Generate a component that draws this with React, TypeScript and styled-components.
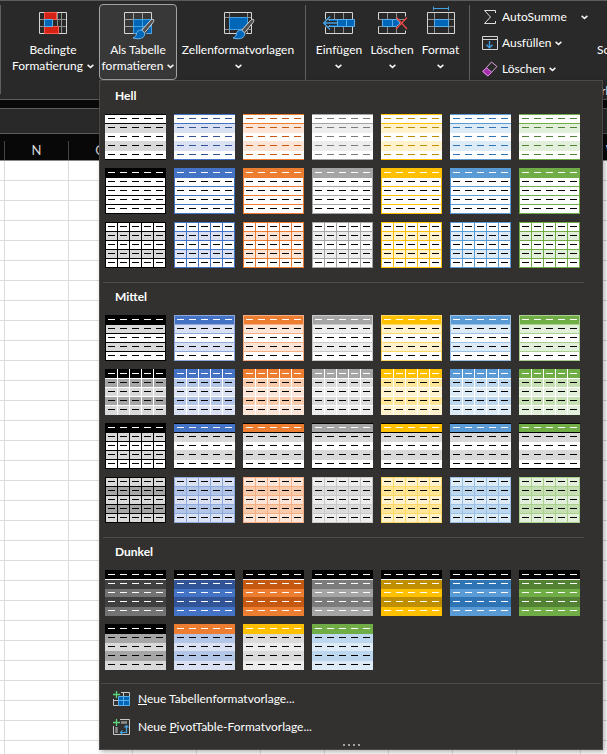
import React from 'react';
import styled, { createGlobalStyle, css } from 'styled-components';

const GlobalStyle = createGlobalStyle`
  *, *::before, *::after { box-sizing: border-box; }
  body {
    margin: 0;
    background: #ffffff;
    color: #ffffff;
    font-family: Lato, 'Open Sans', sans-serif;
    font-size: 12px;
    line-height: 16px;
  }
  button { font: inherit; color: inherit; }
`;

const Page = styled.div`
  display: flex;
  flex-direction: column;
  height: 100vh;
  overflow: hidden;
`;

/* ---------- ribbon ---------- */

const Ribbon = styled.header`
  position: relative;
  z-index: 2;
  display: flex;
  height: 100px;
  flex: none;
  background: #292929;
  border-top: 1px solid #5c5c5c;
  border-bottom: 1px solid #5c5c5c;
`;

const Group = styled.div`
  display: flex;
  flex: none;
  align-items: flex-start;
  padding: 3px 6px 0;
`;

const Divider = styled.div`
  flex: none;
  width: 1px;
  height: 89px;
  margin-top: 4px;
  background: #5f5f5f;
`;

const Anchor = styled.div`
  position: relative;
`;

const BigButton = styled.button<{ $width: number; $active?: boolean }>`
  display: flex;
  flex-direction: column;
  align-items: center;
  width: ${(p) => p.$width}px;
  height: 76px;
  padding: 0;
  border: 1px solid transparent;
  border-radius: 4px;
  background: transparent;
  white-space: nowrap;
  ${(p) =>
    p.$active &&
    css`
      border-color: #a3a3a3;
      background: #383838;
    `}
`;

const Label = styled.span`
  display: flex;
  flex-direction: column;
  align-items: center;
`;

const LabelLine = styled.span`
  display: flex;
  align-items: center;
  justify-content: center;
  gap: 4px;
  height: 16px;
`;

const EditingGroup = styled.div`
  display: flex;
  flex: none;
  flex-direction: column;
  justify-content: space-between;
  width: 280px;
`;

const EditingTools = styled.div`
  display: flex;
`;

const GroupName = styled.div`
  text-align: center;
`;

const SmallColumn = styled.div`
  display: flex;
  flex-direction: column;
  align-items: flex-start;
  padding: 3px 0 0 12px;
  width: 124px;
  flex: none;
`;

const SmallButton = styled.button<{ $gap: number }>`
  display: flex;
  align-items: center;
  height: 26px;
  padding: 0;
  border: 0;
  background: transparent;
  white-space: nowrap;
  svg:first-child { margin-right: 4px; }
  svg:last-child { margin-left: ${(p) => p.$gap}px; }
`;

const SortButton = styled.button`
  display: block;
  height: 76px;
  margin-left: 3px;
  padding: 37px 0 0;
  border: 0;
  background: transparent;
  white-space: nowrap;
`;

const FormulaBar = styled.div`
  flex: none;
  height: 26px;
  margin-top: 8px;
  background: #292929;
  border-top: 1px solid #5c5c5c;
  border-bottom: 1px solid #5c5c5c;
`;

const DarkStrip = styled.div`
  display: flex;
  flex: none;
  flex-direction: column;
  background: #080808;
`;

/* ---------- sheet ---------- */

const SheetArea = styled.main`
  flex: 1;
  min-height: 0;
  overflow: hidden;
`;

const Sheet = styled.table`
  border-collapse: separate;
  border-spacing: 0;
  table-layout: fixed;
  width: 645px;
  color: #000000;

  col { width: 64px; }
  col:first-child { width: 5px; }

  th {
    height: 27px;
    padding: 7px 0 0;
    background: #080808;
    border-bottom: 1px solid #8a8a8a;
    color: #d8d8d8;
    font-size: 13px;
    font-weight: 400;
    line-height: 19px;
  }
  th span {
    display: block;
    height: 19px;
    border-right: 1px solid #444444;
  }
  td {
    height: 20px;
    padding: 0;
    border-right: 1px solid #dcdcdc;
    border-bottom: 1px solid #dcdcdc;
  }
`;

/* ---------- gallery menu ---------- */

const Menu = styled.div`
  position: absolute;
  top: 100%;
  left: 0;
  background: #323130;
  border: 1px solid #4a4948;
  box-shadow: 2px 2px 5px rgba(0, 0, 0, 0.3);
`;

const Section = styled.section<{ $first?: boolean }>`
  padding: ${(p) => (p.$first ? 1 : 0)}px 22px 0 5px;
`;

const SectionTitle = styled.h2`
  margin: 0 0 4px 10px;
  font-size: 12px;
  font-weight: 700;
  line-height: 28px;
`;

const Gallery = styled.div`
  display: grid;
  grid-template-columns: repeat(7, 61px);
  gap: 8px;
`;

const Swatch = styled.button`
  display: block;
  width: 61px;
  height: 46px;
  padding: 0;
  border: 0;
  background: transparent;
  svg { display: block; }
`;

const Separator = styled.hr<{ $wide?: boolean }>`
  height: 1px;
  margin: ${(p) => (p.$wide ? '13px 1px 1px' : '14px 18px 0 3px')};
  border: 0;
  background: #4e4d4c;
`;

const MenuItem = styled.button`
  display: flex;
  align-items: center;
  gap: 8px;
  width: 100%;
  height: 28px;
  padding: 0 13px;
  border: 0;
  background: transparent;
  text-align: left;
`;

const Grip = styled.div`
  display: flex;
  justify-content: center;
  gap: 3px;
  padding: 3px 0;
  i { width: 2px; height: 2px; background: #a0a0a0; }
`;

/* ---------- table style swatches ---------- */

type Look = {
  header: string;
  odd: string;
  even: string;
  dash: string;
  headDash: string;
  /* y offsets of horizontal rules */
  rules: number[];
  /* x offsets of vertical rules */
  columns: number[];
  line: string;
};

const ACCENT = ['#000000', '#4472c4', '#ed7d31', '#a5a5a5', '#ffc000', '#5b9bd5', '#70ad47'];
const DARK = ['#000000', '#305496', '#c65911', '#7b7b7b', '#bf8f00', '#2f75b5', '#548235'];
const SOFT = ['#000000', '#8ea9db', '#f4b084', '#c9c9c9', '#ffd966', '#9bc2e6', '#a9d08e'];
const MID = ['#a6a6a6', '#b4c6e7', '#f8cbad', '#dbdbdb', '#ffe699', '#bdd7ee', '#c6e0b4'];
const PALE = ['#d9d9d9', '#d9e1f2', '#fce4d6', '#ededed', '#fff2cc', '#ddebf7', '#e2efda'];
const WHITE = '#ffffff';
const BLACK = '#000000';

const ALL_RULES = [0, 9, 18, 27, 36, 45];
const INNER_RULES = [9, 18, 27, 36];
const ALL_COLUMNS = [0, 12, 24, 36, 48, 60];
const INNER_COLUMNS = [12, 24, 36, 48];
const SIDES = [0, 60];

const seven = (make: (i: number) => Look) => ACCENT.map((_, i) => make(i));

const light: Look[] = [
  ...seven((i) => ({ header: WHITE, odd: PALE[i], even: WHITE, dash: DARK[i], headDash: DARK[i], rules: [0, 9, 45], columns: [], line: ACCENT[i] })),
  ...seven((i) => ({ header: ACCENT[i], odd: WHITE, even: WHITE, dash: BLACK, headDash: WHITE, rules: ALL_RULES, columns: SIDES, line: ACCENT[i] })),
  ...seven((i) => ({ header: WHITE, odd: PALE[i], even: WHITE, dash: BLACK, headDash: BLACK, rules: ALL_RULES, columns: ALL_COLUMNS, line: ACCENT[i] })),
];

const medium: Look[] = [
  ...seven((i) => ({ header: ACCENT[i], odd: PALE[i], even: WHITE, dash: BLACK, headDash: WHITE, rules: ALL_RULES, columns: SIDES, line: SOFT[i] })),
  ...seven((i) => ({ header: ACCENT[i], odd: MID[i], even: PALE[i], dash: BLACK, headDash: WHITE, rules: INNER_RULES, columns: INNER_COLUMNS, line: WHITE })),
  ...seven((i) => ({
    header: ACCENT[i], odd: '#d9d9d9', even: WHITE, dash: BLACK, headDash: WHITE,
    rules: i === 0 ? ALL_RULES : [0, 9, 45], columns: i === 0 ? ALL_COLUMNS : [], line: BLACK,
  })),
  ...seven((i) => ({ header: PALE[i], odd: MID[i], even: PALE[i], dash: BLACK, headDash: BLACK, rules: ALL_RULES, columns: ALL_COLUMNS, line: SOFT[i] })),
];

const darkPair = (header: string, odd: string, even: string): Look => ({
  header, odd, even, dash: BLACK, headDash: WHITE, rules: [], columns: [], line: WHITE,
});

const dark: Look[] = [
  ...seven((i) => ({
    header: BLACK, odd: i === 0 ? '#404040' : DARK[i], even: i === 0 ? '#737373' : ACCENT[i],
    dash: WHITE, headDash: WHITE, rules: [9], columns: [], line: WHITE,
  })),
  darkPair(BLACK, MID[0], PALE[0]),
  darkPair(ACCENT[2], MID[1], PALE[1]),
  darkPair(ACCENT[4], MID[3], PALE[3]),
  darkPair(ACCENT[6], MID[5], PALE[5]),
];

const TableSwatch = ({ look, name }: { look: Look; name: string }) => (
  <Swatch type="button" aria-label={name}>
    <svg width="61" height="46" viewBox="0 0 61 46" shapeRendering="crispEdges" aria-hidden="true">
      <rect width="61" height="46" fill={look.even} />
      <rect width="61" height="10" fill={look.header} />
      <rect y="10" width="61" height="9" fill={look.odd} />
      <rect y="27" width="61" height="10" fill={look.odd} />
      {look.rules.map((y) => <rect key={`r${y}`} y={y} width="61" height="1" fill={look.line} />)}
      {look.columns.map((x) => <rect key={`c${x}`} x={x} width="1" height="46" fill={look.line} />)}
      {[4, 13, 22, 31, 40].map((y, row) =>
        [3, 15, 27, 39, 51].map((x) => (
          <rect key={`${x}-${y}`} x={x} y={y} width="7" height="1" fill={row === 0 ? look.headDash : look.dash} />
        )),
      )}
    </svg>
  </Swatch>
);

/* ---------- icons ---------- */

const Chevron = () => (
  <svg width="7" height="5" viewBox="0 0 7 5" fill="none" stroke="#f4f4f4" strokeWidth="1.5" aria-hidden="true">
    <path d="M0.6 0.9 3.5 3.4 6.4 0.9" />
  </svg>
);

const BigIcon = ({ children }: { children: React.ReactNode }) => (
  <svg width="34" height="37" viewBox="0 0 34 37" fill="none" aria-hidden="true">{children}</svg>
);

const Brush = () => (
  <g>
    <path d="M32.5 15 21 25.5 16 30 21 34 25 28.5Z" fill="#292929" />
    <path d="M32.6 14.6c-1.2-.7-2.4.1-3.3 1l-8.6 9.6 2.9 2.7 7.9-9.7c.8-1 1.8-2.5 1.1-3.6Z" fill="#505050" stroke="#d6d6d6" strokeWidth="1" />
    <path d="M20.6 25.2c-3.3-.4-4.9 1.4-5.2 3.8-.2 2-1.6 3.3-3.4 3.9 5.2 1.8 10.4.7 11.4-2.5.3-1 .4-1.9.2-2.5Z" fill="#0067b8" stroke="#6bb8f0" strokeWidth="1" />
  </g>
);

const ConditionalIcon = () => (
  <BigIcon>
    <path d="M3.5 14.5h27M3.5 21.5h27M21.5 7.5v21M25.5 7.5v21" stroke="#8f8f8f" />
    <path d="M3.5 7.5h27v21h-27z" stroke="#d6d6d6" />
    <path d="M8.5 7.5h12v7h-12zM8.5 21.5h14v7h-14z" fill="#d42314" stroke="#ff5a50" />
    <path d="M8.5 14.5h8v7h-8z" fill="#0067b8" stroke="#5aaeea" />
  </BigIcon>
);

const FormatTableIcon = () => (
  <BigIcon>
    <path d="M3.5 7.5h27v21h-27z" stroke="#d6d6d6" />
    <path d="M3.5 14.5h27M3.5 21.5h9M12.5 7.5v21M21.5 7.5v7" stroke="#a0a0a0" />
    <path d="M12.5 14.5h18v14h-18z" fill="#0067b8" />
    <path d="M12.5 28v-13.5h18v14M12.5 21.5h18M21.5 14.5v14" stroke="#429fe0" />
    <Brush />
  </BigIcon>
);

const CellStylesIcon = () => (
  <BigIcon>
    <path d="M3.5 12.5h27M3.5 24.5h27M8.5 7.5v21M26.5 7.5v21" stroke="#8f8f8f" />
    <path d="M3.5 7.5h27v21h-27z" stroke="#d6d6d6" />
    <path d="M8.5 12.5h18v12h-18z" fill="#0067b8" stroke="#429fe0" />
    <Brush />
  </BigIcon>
);

const InsertIcon = () => (
  <BigIcon>
    <path d="M12.5 7.5v21M21.5 7.5v21M3.5 14.5h27M3.5 21.5h27" stroke="#8f8f8f" />
    <path d="M3.5 14v-6.5h27v7M3.5 22v6.5h27v-7" stroke="#d6d6d6" />
    <path d="M7.5 14.5h25v7h-25z" fill="#0067b8" stroke="#5aaeea" />
    <path d="M15.5 15v6M24.5 15v6" stroke="#5aaeea" />
    <path d="M2 18h13" stroke="#292929" strokeWidth="4" />
    <path d="M15 18H2M8 11.5 1.7 18 8 24.5" stroke="#429fe0" strokeWidth="1.4" />
  </BigIcon>
);

const DeleteIcon = () => (
  <BigIcon>
    <path d="M12.5 7.5v21M21.5 7.5v21M3.5 14.5h27M3.5 21.5h27" stroke="#8f8f8f" />
    <path d="M3.5 14.5v-7h27v4M3.5 21.5v7h27v-3" stroke="#d6d6d6" />
    <path d="M20 15h11v7h-11zM2 15h5v6h-5z" fill="#292929" />
    <path d="M7.5 14.5h14l3.5 3.5-3.5 3.5h-14z" fill="#0067b8" stroke="#5aaeea" />
    <path d="M17.5 15v6" stroke="#5aaeea" />
    <path d="M21.5 12.5 32 24M32 12.5 21 24" stroke="#f04848" strokeWidth="1.3" />
  </BigIcon>
);

const FormatIcon = () => (
  <BigIcon>
    <path d="M3.5 14.5h27M3.5 21.5h27M10.5 7.5v21M24.5 7.5v21" stroke="#8f8f8f" />
    <path d="M3.5 7.5h27v21h-27z" stroke="#d6d6d6" />
    <path d="M10.5 14.5h14v7h-14z" fill="#0067b8" stroke="#5aaeea" />
    <path d="M9.5 3.5h15M9.5 1.5v4M24.5 1.5v4" stroke="#429fe0" />
  </BigIcon>
);

const SumIcon = () => (
  <svg width="16" height="16" viewBox="0 0 16 16" fill="none" stroke="#e0e0e0" aria-hidden="true">
    <path d="M13.5 4V1.5H2.5L8.5 8l-6 6.5h11V12" />
  </svg>
);

const FillIcon = () => (
  <svg width="16" height="16" viewBox="0 0 16 16" fill="none" aria-hidden="true">
    <path d="M.5 1.5h15v13H.5zM.5 4.5h15" stroke="#d6d6d6" />
    <path d="M7.5 6v7M4.5 9.8l3 3 3-3" stroke="#429fe0" strokeWidth="1.3" />
  </svg>
);

const EraserIcon = () => (
  <svg width="16" height="16" viewBox="0 0 16 16" fill="none" aria-hidden="true">
    <path d="M9.5 1 15 5.5 6 15 .8 10.5Z" stroke="#d9a5dc" />
    <path d="M4.5 6.7 9.7 11.2 6 15 .8 10.5Z" fill="#a32fab" stroke="#df8be4" />
  </svg>
);

const NewTableIcon = () => (
  <svg width="17" height="17" viewBox="0 0 17 17" fill="none" aria-hidden="true">
    <path d="M8 1.5h8.5v4M.5 8v6.5h5M.5 9.5h5M5.5 9v5M10.5 1.5v4" stroke="#c8c8c8" />
    <path d="M5.5 5.5h11v9h-11z" fill="#0067b8" stroke="#5aaeea" />
    <path d="M10.5 5.5v9M5.5 9.5h11" stroke="#5aaeea" />
    <path d="M3.5 0v7M0 3.5h7" stroke="#5fd67a" strokeWidth="1.3" />
  </svg>
);

const NewPivotIcon = () => (
  <svg width="17" height="17" viewBox="0 0 17 17" fill="none" aria-hidden="true">
    <path d="M7 .5h9.5v15H.5V7" stroke="#c8c8c8" />
    <path d="M8 3.5h6M3.5 8v6" stroke="#8f8f8f" strokeWidth="2.4" />
    <path d="M13.5 7v6.5H8M11.5 8.5l2-2 2 2M9.5 11.5l-2 2 2 2" stroke="#429fe0" strokeWidth="1.2" />
    <path d="M3.5 0v7M0 3.5h7" stroke="#5fd67a" strokeWidth="1.3" />
  </svg>
);

/* ---------- composition ---------- */

type BigProps = { icon: React.ReactNode; lines: string[]; width: number; active?: boolean };

const RibbonButton = ({ icon, lines, width, active }: BigProps) => (
  <BigButton type="button" $width={width} $active={active} aria-haspopup="menu" aria-expanded={!!active}>
    {icon}
    <Label>
      <LabelLine>{lines[0]}</LabelLine>
      <LabelLine>{lines[1]}<Chevron /></LabelLine>
    </Label>
  </BigButton>
);

const sections = [
  { title: 'Hell', looks: light },
  { title: 'Mittel', looks: medium },
  { title: 'Dunkel', looks: dark },
];

const StyleMenu = () => (
  <Menu role="menu">
    {sections.map(({ title, looks }, i) => (
      <React.Fragment key={title}>
        <Section $first={i === 0}>
          <SectionTitle>{title}</SectionTitle>
          <Gallery>
            {looks.map((look, n) => <TableSwatch key={n} look={look} name={`${title} ${n + 1}`} />)}
          </Gallery>
        </Section>
        <Separator $wide={i === sections.length - 1} />
      </React.Fragment>
    ))}
    <MenuItem type="button" role="menuitem">
      <NewTableIcon />
      <span><u>N</u>eue Tabellenformatvorlage...</span>
    </MenuItem>
    <MenuItem type="button" role="menuitem">
      <NewPivotIcon />
      <span>Neue <u>P</u>ivotTable-Formatvorlage...</span>
    </MenuItem>
    <Grip><i /><i /><i /><i /></Grip>
  </Menu>
);

const columnNames = ['', 'N', 'O', 'P', 'Q', 'R', 'S', 'T', 'U', 'V', 'W'];
const rows = Array.from({ length: 30 }, (_, i) => i);

export default function App() {
  return (
    <>
      <GlobalStyle />
      <Page>
        <Ribbon>
          <Divider />
          <Group>
            <RibbonButton icon={<ConditionalIcon />} lines={['Bedingte', 'Formatierung']} width={92} />
            <Anchor>
              <RibbonButton icon={<FormatTableIcon />} lines={['Als Tabelle', 'formatieren']} width={78} active />
              <StyleMenu />
            </Anchor>
            <RibbonButton icon={<CellStylesIcon />} lines={['Zellenformatvorlagen', '']} width={122} />
          </Group>
          <Divider />
          <Group>
            <RibbonButton icon={<InsertIcon />} lines={['Einfügen', '']} width={54} />
            <RibbonButton icon={<DeleteIcon />} lines={['Löschen', '']} width={52} />
            <RibbonButton icon={<FormatIcon />} lines={['Format', '']} width={45} />
          </Group>
          <Divider />
          <EditingGroup>
            <EditingTools>
              <SmallColumn>
                <SmallButton type="button" $gap={14}><SumIcon />AutoSumme<Chevron /></SmallButton>
                <SmallButton type="button" $gap={4}><FillIcon />Ausfüllen<Chevron /></SmallButton>
                <SmallButton type="button" $gap={4}><EraserIcon />Löschen<Chevron /></SmallButton>
              </SmallColumn>
              <SortButton type="button">Sortieren und<br />Filtern</SortButton>
            </EditingTools>
            <GroupName>Bearbeiten</GroupName>
          </EditingGroup>
        </Ribbon>
        <DarkStrip><FormulaBar /></DarkStrip>
        <SheetArea>
          <Sheet>
            <colgroup>{columnNames.map((c) => <col key={c} />)}</colgroup>
            <thead>
              <tr>{columnNames.map((c) => <th key={c} scope="col"><span>{c}</span></th>)}</tr>
            </thead>
            <tbody>
              {rows.map((r) => <tr key={r}>{columnNames.map((c) => <td key={c} />)}</tr>)}
            </tbody>
          </Sheet>
        </SheetArea>
      </Page>
    </>
  );
}
